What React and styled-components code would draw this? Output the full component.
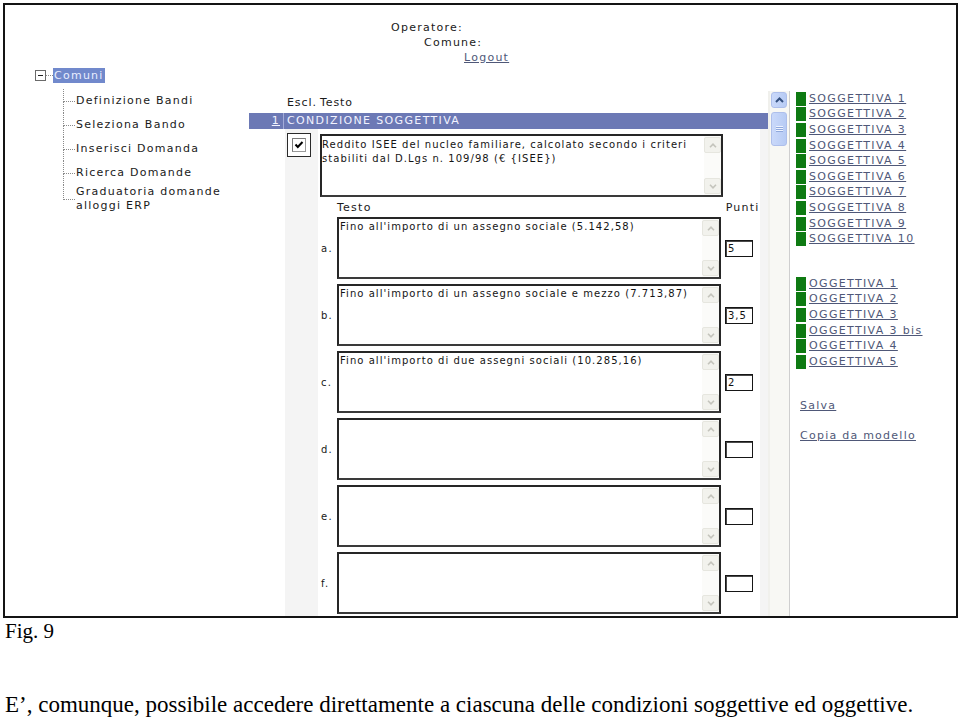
import React from 'react';
import styled, { createGlobalStyle } from 'styled-components';

const GlobalStyle = createGlobalStyle`
  html, body { margin: 0; padding: 0; background: #fff; }
  body { font-family: "DejaVu Sans", Verdana, sans-serif; font-size: 11px; color: #1a1a1a; }
  * { box-sizing: border-box; }
`;

const Page = styled.div`
  width: 960px;
  height: 722px;
  overflow: hidden;
  padding: 3px 0 0 3px;
`;

const Frame = styled.div`
  width: 955px;
  height: 615px;
  border: 2px solid #141414;
  overflow: hidden;
  display: flex;
  flex-direction: column;
  letter-spacing: 1.25px;
`;

const Header = styled.div`
  height: 60px;
  padding-top: 15px;
  line-height: 15px;
  flex-shrink: 0;
`;

const HeaderLine = styled.div`
  padding-left: ${p => p.$indent}px;
`;

const Link = styled.a`
  color: #4f5878;
  text-decoration: underline;
  cursor: pointer;
`;

const Body = styled.div`
  flex: 1;
  min-height: 0;
  display: flex;
  align-items: flex-start;
`;

/* ---------- tree ---------- */
const Tree = styled.div`
  width: 244px;
  flex-shrink: 0;
  padding: 3px 0 0 30px;
`;

const RootRow = styled.div`
  display: flex;
  align-items: center;
  height: 15px;
`;

const MinusBox = styled.span`
  width: 11px;
  height: 11px;
  border: 1px solid #6a6a6a;
  background: #fff;
  display: flex;
  align-items: center;
  justify-content: center;
  &::after {
    content: '';
    width: 5px;
    height: 1px;
    background: #222;
  }
`;

const HDots = styled.span`
  width: ${p => p.$w}px;
  border-top: 1px dotted #8a8a8a;
`;

const RootLabel = styled.span`
  background: #7189cc;
  color: #e9eeff;
  padding: 1px;
  line-height: 13px;
`;

const Children = styled.div`
  margin: 6px 0 0 28px;
`;

const ChildRow = styled.div`
  display: flex;
  align-items: stretch;
  min-height: 24px;
`;

const Connector = styled.div`
  width: 12px;
  flex-shrink: 0;
  display: flex;
  flex-direction: column;
  margin-right: 1px;
`;

const ConnTop = styled.div`
  flex: 1;
  border-left: 1px dotted #8a8a8a;
  border-bottom: 1px dotted #8a8a8a;
`;

const ConnBottom = styled.div`
  flex: 1;
  border-left: ${p => (p.$last ? 'none' : '1px dotted #8a8a8a')};
`;

const ChildText = styled.div`
  display: flex;
  align-items: center;
  line-height: 14px;
  color: #1a1a1a;
`;

/* ---------- middle panel ---------- */
const Panel = styled.div`
  margin-top: 26px;
  align-self: stretch;
  width: 541px;
  flex-shrink: 0;
  display: flex;
  overflow: hidden;
`;

const Content = styled.div`
  width: 519px;
  flex-shrink: 0;
  display: flex;
  flex-direction: column;
`;

const HeadRow = styled.div`
  height: 22px;
  padding: 1px 0 0 38px;
  display: flex;
  align-items: center;
  letter-spacing: 0.9px;
`;

const HeadCell = styled.span`
  width: ${p => (p.$w ? `${p.$w}px` : 'auto')};
`;

const Bar = styled.div`
  height: 16px;
  background: #6c79b5;
  display: flex;
  color: #f2f3ff;
`;

const BarNum = styled.div`
  width: 35px;
  text-align: right;
  padding-right: 3px;
  line-height: 16px;
  border-right: 1px solid #a3acd9;
  text-decoration: underline;
`;

const BarTitle = styled.div`
  padding-left: 3px;
  line-height: 16px;
  letter-spacing: 1.35px;
`;

const Rows = styled.div`
  flex: 1;
  display: flex;
`;

const Blank = styled.div`
  width: 36px;
  flex-shrink: 0;
`;

const CheckCol = styled.div`
  width: 33px;
  flex-shrink: 0;
  background: #f4f4f4;
  padding: 4px 0 0 2px;
`;

const CheckFrame = styled.span`
  width: 24px;
  height: 24px;
  border: 1px solid #2a2a2a;
  background: #fff;
  display: flex;
  align-items: center;
  justify-content: center;
`;

const MainCol = styled.div`
  width: 442px;
  flex-shrink: 0;
  display: flex;
  flex-direction: column;
`;

const Strip = styled.div`
  width: 8px;
  flex-shrink: 0;
  background: #f4f4f4;
`;

const TextBox = styled.div`
  width: ${p => p.$w}px;
  height: ${p => p.$h}px;
  flex-shrink: 0;
  border: 2px solid #262626;
  border-bottom-color: #3a3a3a;
  background: #fff;
  display: flex;
  margin: ${p => p.$m || '0'};
`;

const TextBody = styled.div`
  flex: 1;
  padding: ${p => p.$pt}px 2px 0 ${p => p.$pl}px;
  font-size: 10px;
  line-height: 14px;
  letter-spacing: 1.05px;
  color: #141414;
  overflow: hidden;
`;

const VScroll = styled.div`
  width: 17px;
  flex-shrink: 0;
  display: flex;
  flex-direction: column;
  justify-content: space-between;
  background: #fbfbf9;
  padding: 1px 0;
`;

const ArrowBtn = styled.div`
  height: 16px;
  background: #f2f2ed;
  border: 1px solid #e6e6df;
  border-radius: 2px;
  display: flex;
  align-items: center;
  justify-content: center;
`;

const SubHead = styled.div`
  height: 16px;
  margin-top: 2px;
  display: flex;
  align-items: center;
`;

const SubLabel = styled.span`
  margin-left: ${p => p.$ml}px;
`;

const OptionRow = styled.div`
  display: flex;
  align-items: center;
  height: 62px;
  margin-top: ${p => (p.$first ? 2 : 5)}px;
  flex-shrink: 0;
`;

const OptLabel = styled.div`
  width: 19px;
  padding-left: 3px;
  flex-shrink: 0;
  font-size: 10px;
`;

const Points = styled.input`
  width: 28px;
  height: 17px;
  margin-left: 4px;
  border: 1px solid #161616;
  box-shadow: inset 1px 1px 0 #4a4a4a;
  padding: 0 2px;
  font-family: "DejaVu Sans", Verdana, sans-serif;
  font-size: 10px;
  letter-spacing: 1px;
  color: #111;
  background: #fff;
  outline: none;
`;

const PanelScroll = styled.div`
  width: 22px;
  flex-shrink: 0;
  background: #f8f8f4;
  border-left: 2px solid #f0f0ec;
  border-right: 1px solid #cfcfcf;
  padding: 1px 2px 0 1px;
  display: flex;
  flex-direction: column;
  gap: 4px;
`;

const BlueBtn = styled.div`
  height: ${p => p.$h}px;
  border-radius: 3px;
  background: linear-gradient(to right, #cad9fa, #b7cbf4);
  border: 1px solid #aebfeb;
  display: flex;
  align-items: center;
  justify-content: center;
`;

/* ---------- right links ---------- */
const Side = styled.div`
  margin: 26px 0 0 6px;
  display: flex;
  flex-direction: column;
`;

const NavItem = styled.div`
  display: flex;
  align-items: center;
  height: 15.6px;
  margin-top: ${p => p.$mt || 0}px;
`;

const Square = styled.span`
  width: 10px;
  height: 14px;
  background: #0e7a12;
  margin-right: 3px;
  flex-shrink: 0;
`;

const NavLink = styled(Link)`
  letter-spacing: 1.35px;
  line-height: 14px;
`;

const Action = styled.div`
  margin: ${p => p.$mt}px 0 0 4px;
  line-height: 15px;
`;

/* ---------- caption ---------- */
const Caption = styled.div`
  font-family: "Liberation Serif", "Times New Roman", serif;
  font-size: 21px;
  line-height: 21px;
  color: #000;
  padding-left: 2px;
  margin-top: 3px;
`;

const Sentence = styled(Caption)`
  margin-top: 51px;
  font-size: 23px;
  line-height: 23px;
`;

const Chevron = ({ up, color = '#c4c4bc', w = 8 }) => (
  <svg width={w} height="5" viewBox="0 0 8 5">
    <path d={up ? 'M1 4.2 L4 1.2 L7 4.2' : 'M1 0.8 L4 3.8 L7 0.8'} fill="none" stroke={color} strokeWidth="1.6" />
  </svg>
);

const InnerScroll = () => (
  <VScroll>
    <ArrowBtn><Chevron up /></ArrowBtn>
    <ArrowBtn><Chevron /></ArrowBtn>
  </VScroll>
);

const CheckMark = () => (
  <svg width="14" height="14" viewBox="0 0 14 14">
    <rect x="0.5" y="0.5" width="13" height="13" fill="#fff" stroke="#9a9a9a" />
    <path d="M0.5 13.5 V0.5 H13.5" fill="none" stroke="#7a7a7a" />
    <path d="M3.5 6.5 L5.8 9 L10.5 4" fill="none" stroke="#000" strokeWidth="2" />
  </svg>
);

const treeItems = [
  'Definizione Bandi',
  'Seleziona Bando',
  'Inserisci Domanda',
  'Ricerca Domande',
  ['Graduatoria domande', 'alloggi ERP'],
];

const mainText = 'Reddito ISEE del nucleo familiare, calcolato secondo i criteri stabiliti dal D.Lgs n. 109/98 (€ {ISEE})';

const options = [
  { l: 'a.', t: "Fino all'importo di un assegno sociale (5.142,58)", p: '5' },
  { l: 'b.', t: "Fino all'importo di un assegno sociale e mezzo (7.713,87)", p: '3,5' },
  { l: 'c.', t: "Fino all'importo di due assegni sociali (10.285,16)", p: '2' },
  { l: 'd.', t: '', p: '' },
  { l: 'e.', t: '', p: '' },
  { l: 'f.', t: '', p: '' },
];

const sogg = Array.from({ length: 10 }, (_, i) => `SOGGETTIVA ${i + 1}`);
const ogg = ['OGGETTIVA 1', 'OGGETTIVA 2', 'OGGETTIVA 3', 'OGGETTIVA 3 bis', 'OGGETTIVA 4', 'OGGETTIVA 5'];

export default function App() {
  return (
    <Page>
      <GlobalStyle />
      <Frame>
        <Header>
          <HeaderLine $indent={386}>Operatore:</HeaderLine>
          <HeaderLine $indent={419}>Comune:</HeaderLine>
          <HeaderLine $indent={459}><Link>Logout</Link></HeaderLine>
        </Header>
        <Body>
          <Tree>
            <RootRow>
              <MinusBox />
              <HDots $w={7} />
              <RootLabel>Comuni</RootLabel>
            </RootRow>
            <Children>
              {treeItems.map((it, i) => {
                const last = i === treeItems.length - 1;
                return (
                  <ChildRow key={i}>
                    <Connector>
                      <ConnTop />
                      <ConnBottom $last={last} />
                    </Connector>
                    <ChildText>
                      {Array.isArray(it) ? (
                        <span>{it[0]}<br />{it[1]}</span>
                      ) : (
                        it
                      )}
                    </ChildText>
                  </ChildRow>
                );
              })}
            </Children>
          </Tree>

          <Panel>
            <Content>
              <HeadRow>
                <HeadCell $w={33}>Escl.</HeadCell>
                <HeadCell>Testo</HeadCell>
              </HeadRow>
              <Bar>
                <BarNum>1</BarNum>
                <BarTitle>CONDIZIONE SOGGETTIVA</BarTitle>
              </Bar>
              <Rows>
                <Blank />
                <CheckCol>
                  <CheckFrame><CheckMark /></CheckFrame>
                </CheckCol>
                <MainCol>
                  <TextBox $w={403} $h={63} $m="5px 0 0 2px">
                    <TextBody $pt={2} $pl={0}>{mainText}</TextBody>
                    <InnerScroll />
                  </TextBox>
                  <SubHead>
                    <SubLabel $ml={19}>Testo</SubLabel>
                    <SubLabel $ml={354}>Punti</SubLabel>
                  </SubHead>
                  {options.map((o, i) => (
                    <OptionRow key={o.l} $first={i === 0}>
                      <OptLabel>{o.l}</OptLabel>
                      <TextBox $w={384} $h={62}>
                        <TextBody $pt={1} $pl={1}>{o.t}</TextBody>
                        <InnerScroll />
                      </TextBox>
                      <Points readOnly value={o.p} />
                    </OptionRow>
                  ))}
                </MainCol>
                <Strip />
              </Rows>
            </Content>
            <PanelScroll>
              <BlueBtn $h={16}>
                <svg width="9" height="6" viewBox="0 0 9 6">
                  <path d="M1 5 L4.5 1.5 L8 5" fill="none" stroke="#34507f" strokeWidth="2" />
                </svg>
              </BlueBtn>
              <BlueBtn $h={34}>
                <svg width="7" height="8" viewBox="0 0 7 8">
                  <path d="M0 1.5 H7 M0 3.5 H7 M0 5.5 H7" stroke="#eef3ff" strokeWidth="1" />
                  <path d="M0 2.5 H7 M0 4.5 H7 M0 6.5 H7" stroke="#8fa8dc" strokeWidth="1" />
                </svg>
              </BlueBtn>
            </PanelScroll>
          </Panel>

          <Side>
            {sogg.map(s => (
              <NavItem key={s}>
                <Square />
                <NavLink>{s}</NavLink>
              </NavItem>
            ))}
            {ogg.map((s, i) => (
              <NavItem key={s} $mt={i === 0 ? 29 : 0}>
                <Square />
                <NavLink>{s}</NavLink>
              </NavItem>
            ))}
            <Action $mt={28}><Link>Salva</Link></Action>
            <Action $mt={15}><Link>Copia da modello</Link></Action>
          </Side>
        </Body>
      </Frame>
      <Caption>Fig. 9</Caption>
      <Sentence>E’, comunque, possibile accedere direttamente a ciascuna delle condizioni soggettive ed oggettive.</Sentence>
    </Page>
  );
}
